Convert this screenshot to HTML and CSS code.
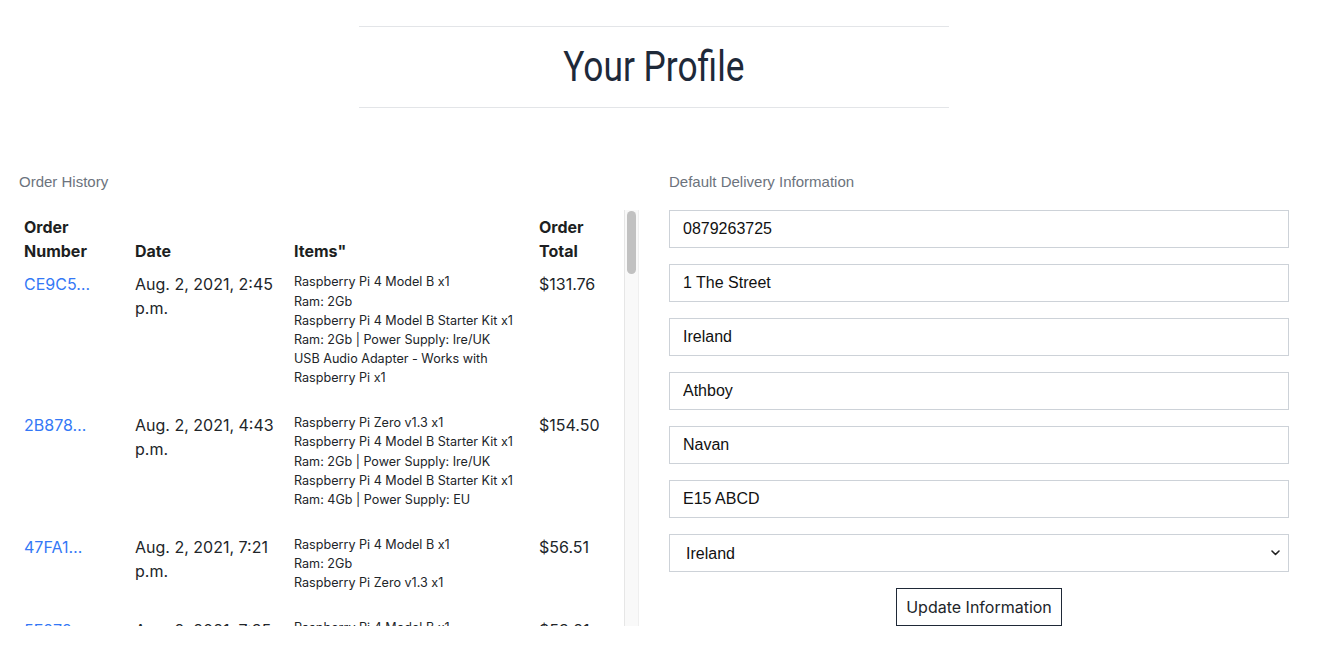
FILE: index.html
```html
<!DOCTYPE html>
<html lang="en">
<head>
<meta charset="utf-8">
<title>Your Profile</title>
<link rel="stylesheet" href="styles.css">
</head>
<body>
<div class="page">
  <div class="title-block">
    <h1 class="title">Your Profile</h1>
  </div>
  <div class="columns">
    <section class="col">
      <p class="section-label">Order History</p>
      <div class="scroll-wrap">
      <div class="scroll">
        <table class="orders">
          <colgroup>
            <col class="c-num"><col class="c-date"><col class="c-items"><col class="c-total">
          </colgroup>
          <thead>
            <tr><th>Order Number</th><th>Date</th><th>Items"</th><th>Order Total</th></tr>
          </thead>
          <tbody>
            <tr>
              <td><a class="order-link" href="#">CE9C5…</a></td>
              <td>Aug. 2, 2021, 2:45 p.m.</td>
              <td><p class="items">Raspberry Pi 4 Model B x1<br>Ram: 2Gb<br>Raspberry Pi 4 Model B Starter Kit x1<br>Ram: 2Gb | Power Supply: Ire/UK<br>USB Audio Adapter - Works with Raspberry Pi x1</p></td>
              <td>$131.76</td>
            </tr>
            <tr>
              <td><a class="order-link" href="#">2B878…</a></td>
              <td>Aug. 2, 2021, 4:43 p.m.</td>
              <td><p class="items">Raspberry Pi Zero v1.3 x1<br>Raspberry Pi 4 Model B Starter Kit x1<br>Ram: 2Gb | Power Supply: Ire/UK<br>Raspberry Pi 4 Model B Starter Kit x1<br>Ram: 4Gb | Power Supply: EU</p></td>
              <td>$154.50</td>
            </tr>
            <tr>
              <td><a class="order-link" href="#">47FA1…</a></td>
              <td>Aug. 2, 2021, 7:21 p.m.</td>
              <td><p class="items">Raspberry Pi 4 Model B x1<br>Ram: 2Gb<br>Raspberry Pi Zero v1.3 x1</p></td>
              <td>$56.51</td>
            </tr>
            <tr>
              <td><a class="order-link" href="#">5F272…</a></td>
              <td>Aug. 2, 2021, 7:35 p.m.</td>
              <td><p class="items">Raspberry Pi 4 Model B x1<br>Ram: 2Gb</p></td>
              <td>$53.21</td>
            </tr>
            <tr>
              <td><a class="order-link" href="#">9A1D3…</a></td>
              <td>Aug. 3, 2021, 9:12 a.m.</td>
              <td><p class="items">Raspberry Pi 4 Model B Starter Kit x1<br>Ram: 4Gb | Power Supply: Ire/UK<br>Raspberry Pi Zero v1.3 x2<br>USB Audio Adapter - Works with Raspberry Pi x1</p></td>
              <td>$142.87</td>
            </tr>
            <tr>
              <td><a class="order-link" href="#">B7E20…</a></td>
              <td>Aug. 3, 2021, 1:05 p.m.</td>
              <td><p class="items">Raspberry Pi 4 Model B x1<br>Ram: 8Gb<br>Raspberry Pi Zero v1.3 x1</p></td>
              <td>$98.40</td>
            </tr>
            <tr>
              <td><a class="order-link" href="#">0C4F8…</a></td>
              <td>Aug. 4, 2021, 10:30 a.m.</td>
              <td><p class="items">Raspberry Pi 4 Model B x1<br>Ram: 4Gb<br>Raspberry Pi 4 Model B Starter Kit x1<br>Ram: 2Gb | Power Supply: EU<br>USB Audio Adapter - Works with Raspberry Pi x1</p></td>
              <td>$167.25</td>
            </tr>
            <tr>
              <td><a class="order-link" href="#">D3A91…</a></td>
              <td>Aug. 4, 2021, 3:48 p.m.</td>
              <td><p class="items">Raspberry Pi 4 Model B Starter Kit x1<br>Ram: 4Gb | Power Supply: Ire/UK<br>Raspberry Pi 4 Model B Starter Kit x1<br>Ram: 8Gb | Power Supply: EU</p></td>
              <td>$201.90</td>
            </tr>
            <tr>
              <td><a class="order-link" href="#">E81B6…</a></td>
              <td>Aug. 5, 2021, 11:02 a.m.</td>
              <td><p class="items">Raspberry Pi Zero v1.3 x3<br>USB Audio Adapter - Works with Raspberry Pi x1</p></td>
              <td>$41.35</td>
            </tr>
            <tr>
              <td><a class="order-link" href="#">1F6C2…</a></td>
              <td>Aug. 5, 2021, 6:14 p.m.</td>
              <td><p class="items">Raspberry Pi 4 Model B x1<br>Ram: 2Gb<br>Raspberry Pi 4 Model B x1<br>Ram: 4Gb<br>USB Audio Adapter - Works with Raspberry Pi x1</p></td>
              <td>$118.64</td>
            </tr>
            <tr>
              <td><a class="order-link" href="#">72D0E…</a></td>
              <td>Aug. 6, 2021, 8:55 a.m.</td>
              <td><p class="items">Raspberry Pi 4 Model B Starter Kit x1<br>Ram: 2Gb | Power Supply: Ire/UK<br>Raspberry Pi Zero v1.3 x1</p></td>
              <td>$89.99</td>
            </tr>
            <tr>
              <td><a class="order-link" href="#">8B3A7…</a></td>
              <td>Aug. 6, 2021, 2:37 p.m.</td>
              <td><p class="items">Raspberry Pi 4 Model B x1<br>Ram: 8Gb<br>Raspberry Pi 4 Model B Starter Kit x1<br>Ram: 4Gb | Power Supply: Ire/UK<br>Raspberry Pi Zero v1.3 x1</p></td>
              <td>$184.20</td>
            </tr>
            <tr>
              <td><a class="order-link" href="#">A45E9…</a></td>
              <td>Aug. 7, 2021, 12:20 p.m.</td>
              <td><p class="items">Raspberry Pi 4 Model B x2<br>Ram: 2Gb<br>Raspberry Pi Zero v1.3 x1</p></td>
              <td>$112.58</td>
            </tr>
            <tr>
              <td><a class="order-link" href="#">C09F1…</a></td>
              <td>Aug. 7, 2021, 5:41 p.m.</td>
              <td><p class="items">Raspberry Pi 4 Model B Starter Kit x1<br>Ram: 8Gb | Power Supply: EU<br>USB Audio Adapter - Works with Raspberry Pi x1<br>Raspberry Pi Zero v1.3 x1</p></td>
              <td>$139.70</td>
            </tr>
            <tr>
              <td><a class="order-link" href="#">F2B84…</a></td>
              <td>Aug. 8, 2021, 9:47 a.m.</td>
              <td><p class="items">Raspberry Pi 4 Model B x1<br>Ram: 4Gb<br>Raspberry Pi 4 Model B Starter Kit x1<br>Ram: 2Gb | Power Supply: Ire/UK<br>USB Audio Adapter - Works with Raspberry Pi x1</p></td>
              <td>$158.33</td>
            </tr>
            <tr>
              <td><a class="order-link" href="#">3E7D5…</a></td>
              <td>Aug. 8, 2021, 4:26 p.m.</td>
              <td><p class="items">Raspberry Pi Zero v1.3 x2<br>Raspberry Pi 4 Model B x1<br>Ram: 2Gb</p></td>
              <td>$76.12</td>
            </tr>
            <tr>
              <td><a class="order-link" href="#">6A0C3…</a></td>
              <td>Aug. 9, 2021, 10:08 a.m.</td>
              <td><p class="items">Raspberry Pi 4 Model B Starter Kit x1<br>Ram: 4Gb | Power Supply: EU<br>Raspberry Pi 4 Model B Starter Kit x1<br>Ram: 2Gb | Power Supply: Ire/UK<br>Raspberry Pi Zero v1.3 x1</p></td>
              <td>$214.05</td>
            </tr>
            <tr>
              <td><a class="order-link" href="#">90F4B…</a></td>
              <td>Aug. 9, 2021, 7:52 p.m.</td>
              <td><p class="items">Raspberry Pi 4 Model B x1<br>Ram: 8Gb<br>USB Audio Adapter - Works with Raspberry Pi x1</p></td>
              <td>$102.44</td>
            </tr>
            <tr>
              <td><a class="order-link" href="#">B51E0…</a></td>
              <td>Aug. 10, 2021, 1:33 p.m.</td>
              <td><p class="items">Raspberry Pi 4 Model B x1<br>Ram: 2Gb<br>Raspberry Pi 4 Model B Starter Kit x1<br>Ram: 8Gb | Power Supply: Ire/UK<br>USB Audio Adapter - Works with Raspberry Pi x1</p></td>
              <td>$176.81</td>
            </tr>
            <tr>
              <td><a class="order-link" href="#">D8C27…</a></td>
              <td>Aug. 10, 2021, 6:09 p.m.</td>
              <td><p class="items">Raspberry Pi Zero v1.3 x1<br>Raspberry Pi 4 Model B x1<br>Ram: 4Gb<br>USB Audio Adapter - Works with Raspberry Pi x1</p></td>
              <td>$94.17</td>
            </tr>
            <tr>
              <td><a class="order-link" href="#">E3F96…</a></td>
              <td>Aug. 11, 2021, 11:45 a.m.</td>
              <td><p class="items">Raspberry Pi 4 Model B Starter Kit x1<br>Ram: 2Gb | Power Supply: EU<br>Raspberry Pi Zero v1.3 x1</p></td>
              <td>$87.63</td>
            </tr>
            <tr>
              <td><a class="order-link" href="#">4C7A2…</a></td>
              <td>Aug. 11, 2021, 8:18 p.m.</td>
              <td><p class="items">Raspberry Pi 4 Model B x1<br>Ram: 4Gb<br>Raspberry Pi 4 Model B Starter Kit x1<br>Ram: 4Gb | Power Supply: Ire/UK<br>USB Audio Adapter - Works with Raspberry Pi x1</p></td>
              <td>$189.46</td>
            </tr>
          </tbody>
        </table>
      </div>
      <div class="scrollbar" aria-hidden="true"><div class="scrollbar-thumb"></div></div>
      </div>
    </section>
    <section class="col">
      <p class="section-label">Default Delivery Information</p>
      <form class="delivery-form">
        <input class="field" type="text" value="0879263725">
        <input class="field" type="text" value="1 The Street">
        <input class="field" type="text" value="Ireland">
        <input class="field" type="text" value="Athboy">
        <input class="field" type="text" value="Navan">
        <input class="field" type="text" value="E15 ABCD">
        <div class="select-wrap">
          <select class="field select">
            <option selected>Ireland</option>
            <option>United Kingdom</option>
          </select>
          <svg class="chev" width="9" height="6" viewBox="0 0 9 6"><path d="M1 1l3.5 3.5L8 1" fill="none" stroke="#222" stroke-width="1.6" stroke-linecap="round" stroke-linejoin="round"/></svg>
        </div>
        <div class="actions">
          <button class="btn" type="button">Update Information</button>
        </div>
      </form>
    </section>
  </div>
</div>
</body>
</html>
```
FILE: styles.css
```css
* { box-sizing: border-box; }
body {
  margin: 0;
  background: #fff;
  color: #212529;
  font-family: Inter, "Liberation Sans", sans-serif;
}
.page {
  width: 1308px;
  padding: 0 19px;
}
.title-block {
  width: 590px;
  height: 82px;
  margin: 26px auto 0;
  border-top: 1px solid #e3e5e8;
  border-bottom: 1px solid #e3e5e8;
  display: flex;
  align-items: center;
  justify-content: center;
}
.title {
  margin: 0;
  font-family: Roboto, "Liberation Sans", sans-serif;
  font-size: 42px;
  font-weight: 400;
  line-height: 1;
  color: #1e2939;
  transform: scaleX(0.84);
}
.columns {
  display: flex;
  gap: 30px;
  margin-top: 65px;
}
.col { width: 620px; }
.section-label {
  margin: 0 0 19px;
  font-family: "Liberation Sans", Arial, sans-serif;
  font-size: 15px;
  line-height: 18px;
  color: #6c737d;
}
.scroll-wrap {
  display: flex;
  height: 416px;
}
.scroll {
  width: 605px;
  height: 416px;
  overflow-y: auto;
  scrollbar-width: none;
}
.scroll::-webkit-scrollbar { display: none; }
.scrollbar {
  width: 15px;
  height: 416px;
  background: #f9f9f9;
  border-left: 1px solid #e6e6e6;
  border-right: 1px solid #efefef;
  padding: 1px 0 0 2px;
}
.scrollbar-thumb {
  width: 9px;
  height: 63px;
  border-radius: 5px;
  background: #c1c1c1;
}
.orders {
  width: 605px;
  table-layout: fixed;
  border-collapse: collapse;
}
.c-num { width: 111px; }
.c-date { width: 159px; }
.c-items { width: 245px; }
.c-total { width: 90px; }
.orders th,
.orders td {
  padding: 4.8px 5px;
  font-size: 16px;
  line-height: 24px;
  text-align: left;
}
.orders th {
  font-weight: 700;
  vertical-align: bottom;
  color: #1d1f22;
}
.orders td { vertical-align: top; }
.order-link {
  color: #3478f6;
  text-decoration: none;
}
.items {
  margin: 0 0 16px;
  font-size: 12.6px;
  line-height: 19.2px;
  font-feature-settings: "calt" 0;
}
.delivery-form { margin: 0; }
.field {
  display: block;
  width: 620px;
  height: 38px;
  margin: 0 0 16px;
  padding: 0 13px;
  border: 1px solid #cdd2d8;
  border-radius: 0;
  background: #fff;
  font-family: "Liberation Sans", Arial, sans-serif;
  font-size: 16px;
  color: #111;
  outline: none;
}
.select-wrap { position: relative; }
.select {
  appearance: none;
  -webkit-appearance: none;
  padding-left: 16px;
}
.chev {
  position: absolute;
  right: 9px;
  top: 16px;
  pointer-events: none;
}
.actions {
  display: flex;
  justify-content: center;
}
.btn {
  height: 38px;
  padding: 0 9px;
  border: 1px solid #1f2937;
  border-radius: 0;
  background: #fff;
  font-family: Inter, "Liberation Sans", sans-serif;
  font-size: 16px;
  color: #212529;
}
```
